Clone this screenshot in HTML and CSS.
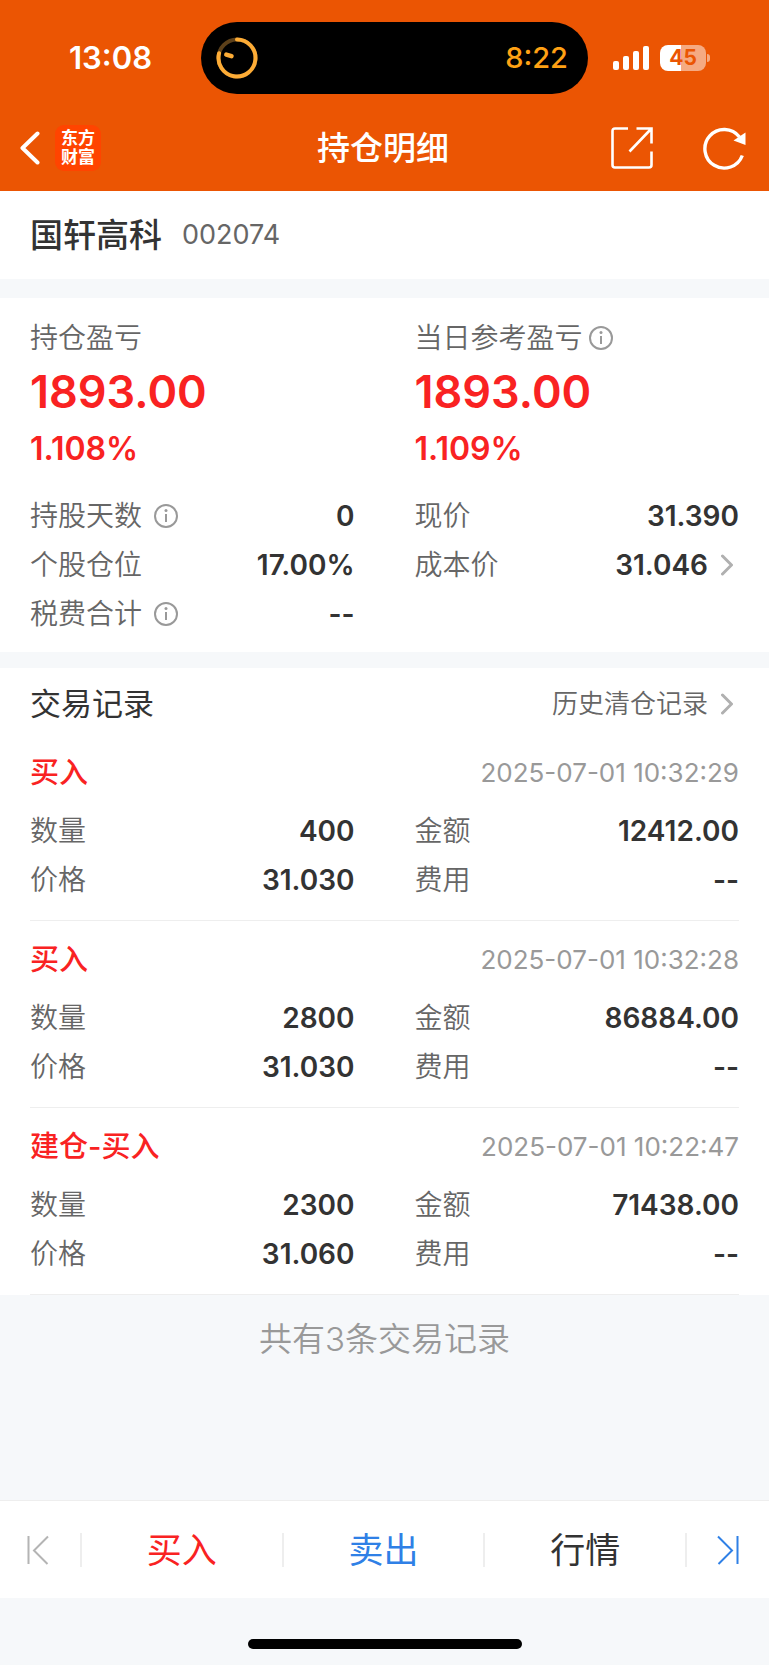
FILE: index.html
```html
<!DOCTYPE html>
<html lang="zh-CN">
<head>
    <meta charset="UTF-8">
    <meta name="viewport" content="width=device-width, initial-scale=1.0">
    <title>持仓明细</title>
    <link rel="stylesheet" href="styles.css">
</head>
<body>
    <header class="top">
        <div class="status-bar">
            <span class="clock">13:08</span>
            <div class="island">
                <svg width="42" height="42" viewBox="0 0 42 42" fill="none" stroke-linecap="round">
                    <circle cx="21" cy="21" r="18.5" stroke="#5c401a" stroke-width="4"/>
                    <path d="M21 2.5A18.5 18.5 0 1 1 3.1 16.3" stroke="#fdac36" stroke-width="4"/>
                    <path d="M10.3 17.6L15.5 19.2" stroke="#fdac36" stroke-width="4.5"/>
                </svg>
                <span class="timer">8:22</span>
            </div>
            <div class="indicators">
                <svg width="36" height="24" viewBox="0 0 36 24" fill="#fff">
                    <rect x="0" y="15" width="6" height="9" rx="2"/>
                    <rect x="10" y="10" width="6" height="14" rx="2"/>
                    <rect x="20" y="5" width="6" height="19" rx="2"/>
                    <rect x="30" y="0" width="6" height="24" rx="2"/>
                </svg>
                <span class="battery">45</span>
            </div>
        </div>
        <nav class="nav-bar">
            <div class="nav-left">
                <button class="icon-button" aria-label="返回">
                    <svg width="20" height="34" viewBox="0 0 20 34" fill="none" stroke="#fff" stroke-width="4" stroke-linecap="round" stroke-linejoin="round"><path d="M17.5 2.5L2.5 17L17.5 31.5"/></svg>
                </button>
                <div class="logo">东方<br>财富</div>
            </div>
            <h1>持仓明细</h1>
            <div class="nav-right">
                <button class="icon-button" aria-label="分享">
                    <svg width="42" height="42" viewBox="0 0 42 42" fill="none" stroke="#fff" stroke-width="2.6">
                        <path d="M17 1.5H4Q1.5 1.5 1.5 4V38Q1.5 40.5 4 40.5H38Q40.5 40.5 40.5 38V24.5"/>
                        <path d="M25.5 1.5H40.5V16.5M40 2L18.5 24.5"/>
                    </svg>
                </button>
                <button class="icon-button" aria-label="刷新">
                    <svg width="43" height="43" viewBox="0 0 43 43" fill="none">
                        <path d="M39.3 28.5A19.3 19.3 0 1 1 36.5 10" stroke="#fff" stroke-width="3.4"/>
                        <path d="M42.5 5.5V18L30.5 13.5Z" fill="#fff"/>
                    </svg>
                </button>
            </div>
        </nav>
    </header>

    <main>
        <section class="stock">
            <h2>国轩高科</h2>
            <span class="code">002074</span>
        </section>

        <section class="position">
            <div class="columns">
                <div class="profit">
                    <div class="label">持仓盈亏</div>
                    <div class="amount">1893.00</div>
                    <div class="percent">1.108%</div>
                </div>
                <div class="profit">
                    <div class="label">当日参考盈亏
                        <svg class="info" viewBox="0 0 24 24"><circle cx="12" cy="12" r="11"/><path d="M12 10V18"/><circle class="dot" cx="12" cy="6.5" r="1.5"/></svg>
                    </div>
                    <div class="amount">1893.00</div>
                    <div class="percent">1.109%</div>
                </div>
            </div>
            <div class="columns">
                <dl>
                    <div class="row">
                        <dt>持股天数
                            <svg class="info" viewBox="0 0 24 24"><circle cx="12" cy="12" r="11"/><path d="M12 10V18"/><circle class="dot" cx="12" cy="6.5" r="1.5"/></svg>
                        </dt>
                        <dd>0</dd>
                    </div>
                    <div class="row"><dt>个股仓位</dt><dd>17.00%</dd></div>
                    <div class="row">
                        <dt>税费合计
                            <svg class="info" viewBox="0 0 24 24"><circle cx="12" cy="12" r="11"/><path d="M12 10V18"/><circle class="dot" cx="12" cy="6.5" r="1.5"/></svg>
                        </dt>
                        <dd>--</dd>
                    </div>
                </dl>
                <dl>
                    <div class="row"><dt>现价</dt><dd>31.390</dd></div>
                    <div class="row">
                        <dt>成本价</dt>
                        <dd>31.046<svg class="arrow" viewBox="0 0 12 22"><path d="M1.5 2L10.5 11L1.5 20"/></svg></dd>
                    </div>
                </dl>
            </div>
        </section>

        <section class="records">
            <div class="records-head">
                <h3>交易记录</h3>
                <a href="#history">历史清仓记录<svg class="arrow" viewBox="0 0 12 22"><path d="M1.5 2L10.5 11L1.5 20"/></svg></a>
            </div>
            <article class="record">
                <div class="record-head"><h4>买入</h4><time>2025-07-01 10:32:29</time></div>
                <dl class="columns">
                    <div class="row"><dt>数量</dt><dd>400</dd></div>
                    <div class="row"><dt>金额</dt><dd>12412.00</dd></div>
                    <div class="row"><dt>价格</dt><dd>31.030</dd></div>
                    <div class="row"><dt>费用</dt><dd>--</dd></div>
                </dl>
            </article>
            <article class="record">
                <div class="record-head"><h4>买入</h4><time>2025-07-01 10:32:28</time></div>
                <dl class="columns">
                    <div class="row"><dt>数量</dt><dd>2800</dd></div>
                    <div class="row"><dt>金额</dt><dd>86884.00</dd></div>
                    <div class="row"><dt>价格</dt><dd>31.030</dd></div>
                    <div class="row"><dt>费用</dt><dd>--</dd></div>
                </dl>
            </article>
            <article class="record">
                <div class="record-head"><h4>建仓-买入</h4><time>2025-07-01 10:22:47</time></div>
                <dl class="columns">
                    <div class="row"><dt>数量</dt><dd>2300</dd></div>
                    <div class="row"><dt>金额</dt><dd>71438.00</dd></div>
                    <div class="row"><dt>价格</dt><dd>31.060</dd></div>
                    <div class="row"><dt>费用</dt><dd>--</dd></div>
                </dl>
            </article>
        </section>
        <p class="total">共有3条交易记录</p>
    </main>

    <footer class="bottom">
        <div class="actions">
            <button class="side prev" aria-label="上一只">
                <svg width="22" height="30" viewBox="0 0 22 30"><path d="M1.5 1V29M21 1.5L7 15.5L20.5 29"/></svg>
            </button>
            <button class="buy">买入</button>
            <button class="sell">卖出</button>
            <button class="quote">行情</button>
            <button class="side next" aria-label="下一只">
                <svg width="22" height="30" viewBox="0 0 22 30"><path d="M20.5 1V29M1 1.5L15 15.5L1.5 29"/></svg>
            </button>
        </div>
        <div class="home-indicator"></div>
    </footer>
</body>
</html>
```

FILE: styles.css
```css
* {
    box-sizing: border-box;
}
body {
    margin: 0;
    min-height: 100vh;
    display: flex;
    flex-direction: column;
    font-family: Inter, "Noto Sans CJK SC", sans-serif;
    font-size: 28px;
    line-height: 40px;
    color: #333;
    background: #f6f8fa;
}
h1, h2, h3, h4, p, dl, dd {
    margin: 0;
}
button {
    padding: 0;
    border: none;
    background: transparent;
    font-family: inherit;
    cursor: pointer;
}
svg {
    display: block;
    flex: none;
}

/* Header */
.top {
    background: #eb5503;
    color: #fff;
    padding-top: 22px;
}
.status-bar {
    display: grid;
    grid-template-columns: 181fr 387fr 181fr;
    align-items: center;
    padding-left: 20px;
}
.clock {
    text-align: center;
    font-size: 31px;
    font-weight: 600;
}
.island {
    display: flex;
    align-items: center;
    justify-content: space-between;
    height: 72px;
    padding: 0 20px 0 15px;
    border-radius: 36px;
    background: #000;
}
.timer {
    font-size: 29px;
    font-weight: 500;
    color: #ffa114;
}
.indicators {
    display: flex;
    align-items: center;
    gap: 11px;
    padding-left: 25px;
}
.battery {
    position: relative;
    width: 46px;
    height: 26px;
    border-radius: 8px;
    background: linear-gradient(90deg, #fff 46%, #f5aa82 46%);
    color: #eb5503;
    font-size: 21px;
    font-weight: 700;
    line-height: 26px;
    text-align: center;
}
.battery::after {
    content: "";
    position: absolute;
    top: 9px;
    right: -4px;
    width: 3px;
    height: 8px;
    border-radius: 0 4px 4px 0;
    background: #f5aa82;
}
.nav-bar {
    display: grid;
    grid-template-columns: 1fr auto 1fr;
    align-items: center;
    height: 85px;
    margin-top: 12px;
    padding: 0 23px 1px 20px;
}
.nav-left, .nav-right {
    display: flex;
    align-items: center;
}
.nav-left {
    gap: 15px;
}
.nav-right {
    justify-content: flex-end;
    gap: 50px;
}
.nav-bar h1 {
    font-size: 33px;
    font-weight: 500;
}
.logo {
    width: 46px;
    height: 46px;
    padding: 4px 0;
    border-radius: 9px;
    background: #ff4400;
    font-size: 17px;
    font-weight: 700;
    line-height: 19px;
    text-align: center;
}

/* Stock name */
.stock {
    display: flex;
    align-items: center;
    gap: 20px;
    height: 88px;
    padding: 0 30px;
    background: #fff;
}
.stock h2 {
    font-size: 33px;
    font-weight: 500;
}
.code {
    color: #666;
    font-size: 27px;
}

/* Position summary */
.position {
    margin-top: 19px;
    padding: 20px 30px 14px;
    background: #fff;
}
.columns {
    display: grid;
    grid-template-columns: 1fr 1fr;
    column-gap: 60px;
}
.label, .row dt {
    display: flex;
    align-items: center;
    color: #666;
    font-weight: 350;
}
.label {
    gap: 6px;
}
.row dt {
    gap: 12px;
}
.info {
    width: 24px;
    height: 24px;
    fill: none;
    stroke: #999;
    stroke-width: 2;
}
.info .dot {
    fill: #999;
    stroke: none;
}
.amount {
    color: #f92222;
    font-size: 45px;
    font-weight: 600;
    line-height: 68px;
}
.percent {
    margin-bottom: 19px;
    color: #f92222;
    font-size: 32px;
    font-weight: 600;
    line-height: 46px;
}
.row {
    display: flex;
    align-items: center;
    justify-content: space-between;
    height: 49px;
}
.row dd {
    display: flex;
    align-items: center;
    font-weight: 600;
}
.arrow {
    width: 12px;
    height: 22px;
    margin: 0 6px 0 13px;
    fill: none;
    stroke: #b0b0b0;
    stroke-width: 3;
    stroke-linecap: round;
}

/* Trade records */
.records {
    margin-top: 16px;
    padding: 0 30px;
    background: #fff;
}
.records-head {
    display: flex;
    align-items: center;
    justify-content: space-between;
    height: 66px;
    padding-top: 5px;
}
.records-head h3 {
    font-size: 31px;
    font-weight: 400;
}
.records-head a {
    display: flex;
    align-items: center;
    color: #666;
    font-size: 26px;
    font-weight: 350;
    text-decoration: none;
}
.record {
    padding: 19px 0 16px;
    border-bottom: 1px solid #eee;
}
.record-head {
    display: flex;
    align-items: center;
    justify-content: space-between;
    margin-bottom: 13px;
}
.record-head h4 {
    color: #f92222;
    font-size: 29px;
    font-weight: 500;
}
.record-head time {
    color: #999;
    font-size: 26px;
}
.total {
    padding: 24px 0;
    color: #999;
    font-size: 33px;
    font-weight: 350;
    text-align: center;
}

/* Bottom bar */
.bottom {
    margin-top: auto;
}
.actions {
    display: flex;
    align-items: center;
    height: 98px;
    border-top: 1px solid #eee;
    background: #fff;
}
.actions button {
    display: flex;
    flex: 1;
    align-items: center;
    justify-content: center;
    height: 34px;
    border-right: 2px solid #eee;
    font-size: 35px;
    line-height: 34px;
}
.actions .side {
    flex: 0 0 82px;
}
.actions .prev {
    padding-right: 4px;
}
.actions .next {
    border-right: none;
}
.side svg {
    fill: none;
    stroke: #b4b4b4;
    stroke-width: 2;
}
.next svg {
    stroke: #2f80e6;
}
.buy {
    color: #f92222;
}
.sell {
    color: #2f80e6;
}
.quote {
    color: #333;
}
.home-indicator {
    width: 274px;
    height: 10px;
    margin: 41px auto 16px;
    border-radius: 5px;
    background: #000;
}
```
